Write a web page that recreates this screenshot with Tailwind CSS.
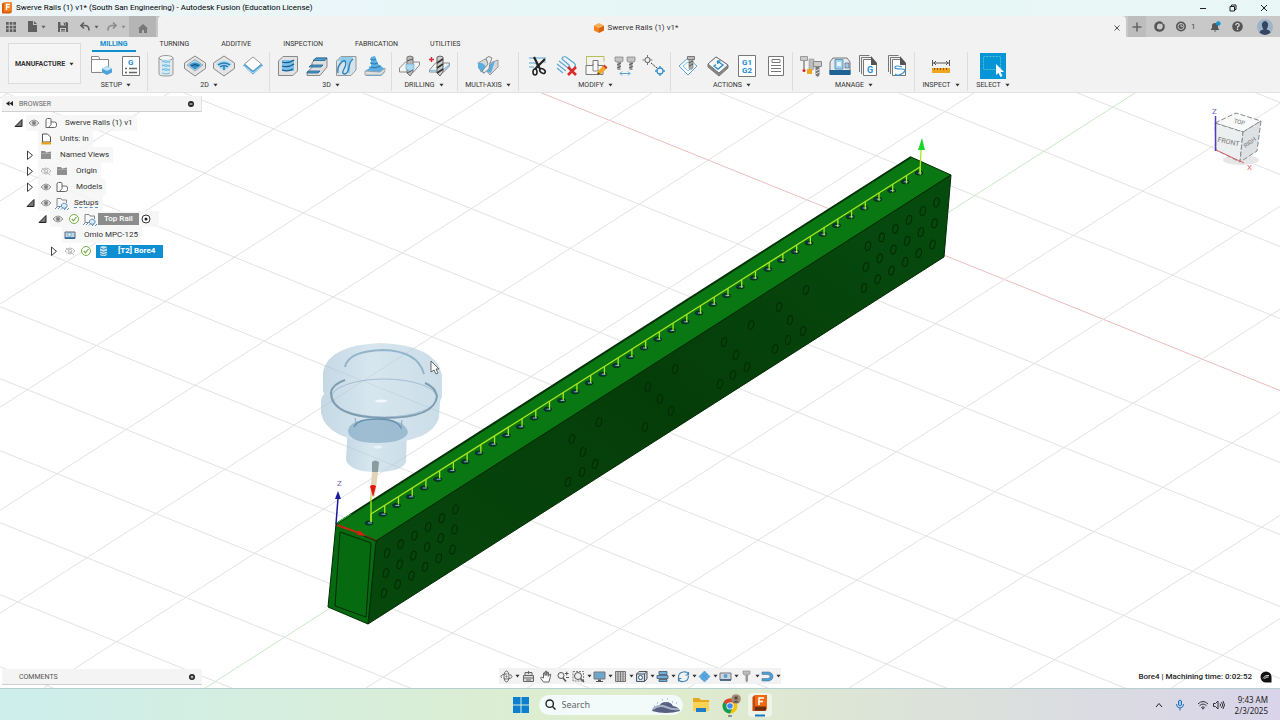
<!DOCTYPE html>
<html lang="en">

<head>
    <meta charset="UTF-8">
    <meta name="viewport" content="width=device-width, initial-scale=1.0">
    <title>Swerve Rails (1) v1* (South San Engineering) - Autodesk Fusion (Education License)</title>
    <script src="https://cdn.jsdelivr.net/npm/@tailwindcss/browser@4"></script>
</head>

<body class="h-screen overflow-hidden flex flex-col bg-white font-[Roboto,'Liberation_Sans',sans-serif] text-[8px] leading-3 text-[#333]">

    <!-- shared icons -->
    <svg class="hidden">
        <symbol id="caret" viewBox="0 0 6 4"><path d="M0.5 0.5h5L3 3.8z" fill="currentColor" /></symbol>
        <symbol id="open" viewBox="0 0 16 16"><path d="M5 11.500h7V4.500z" fill="#777" stroke="#222" /></symbol>
        <symbol id="closed" viewBox="0 0 16 16"><path d="M5.500 4v8.500l5-4.200z" fill="#fff" stroke="#444" /></symbol>
        <symbol id="eye" viewBox="0 0 16 16">
            <path d="M3 8q5-6 10 0q-5 6-10 0z" fill="#ddd" stroke="#999" />
            <circle cx="8" cy="8" r="2" fill="#808080" />
        </symbol>
        <symbol id="eyeoff" viewBox="0 0 16 16">
            <path d="M3 8q5-6 10 0q-5 6-10 0z" fill="none" stroke="#bbb" />
            <circle cx="8" cy="8" r="1.800" fill="none" stroke="#bbb" />
            <path d="M4 5l8 7" stroke="#bbb" />
        </symbol>
        <symbol id="body" viewBox="0 0 16 16">
            <path d="M3 12.500V5q0-1.500 1.500-1.500H7q1 0 1 1V7h3.500q2 0 2 2v1.500q0 2-2 2zM8 7v2.500L5.500 12.500" fill="#fff" stroke="#666" />
        </symbol>
        <symbol id="folder" viewBox="0 0 16 16"><path d="M3 4h4l1 1.500 5-1V12H3z" fill="#8f8f8f" /><path d="M3 6.500h10" stroke="#b5b5b5" stroke-width=".6" /></symbol>
        <symbol id="setup" viewBox="0 0 16 16">
            <path d="M3 11.500V3.500h4l1 1.500h4.500v3M3 11.500h4" fill="none" stroke="#888" />
            <path d="M10 8l3 1.500v2.500l-3 1.500-2.500-1.500v-2.500z" fill="#dcecf7" stroke="#3d82b8" stroke-width=".8" />
            <path d="M1 14l2-2M4 14l2-2M7 14.500l2-2M10 15l2-2M13 15l2-2" stroke="#5a8fbc" />
        </symbol>
        <symbol id="check" viewBox="0 0 16 16">
            <circle cx="8" cy="8" r="4.500" fill="#fff" stroke="#75b04a" />
            <path d="M5.800 8l1.700 1.900L10.400 6" fill="none" stroke="#75b04a" stroke-width="1.200" />
        </symbol>
        <symbol id="logo" viewBox="0 0 12 12"><path d="M1 1.500L3 .5h8v9.500l-2 1.500H1z" fill="#d95a0b" /><path d="M3 .5h8v9H3z" fill="#f58220" /><path d="M5.500 8V2.500h3.500M5.500 5h3" stroke="#fff" stroke-width="1.300" fill="none" /></symbol>
    </svg>

    <!-- window title -->
    <header class="h-4 shrink-0 flex items-center bg-linear-to-r from-[#eef6fb] via-[#e6f6f6] to-[#e9f8f6] text-black">
        <svg class="w-3 h-3 ml-px mr-[3px]"><use href="#logo" /></svg>
        <h1 class="grow">Swerve Rails (1) v1* (South San Engineering) - Autodesk Fusion (Education License)</h1>
        <button aria-label="Minimize" class="w-[30px] flex justify-center"><svg class="w-2 h-2" viewBox="0 0 8 8"><path d="M1 4.500h6" stroke="#222" /></svg></button>
        <button aria-label="Restore" class="w-[30px] flex justify-center"><svg class="w-2 h-2" viewBox="0 0 8 8" fill="none" stroke="#222"><path d="M1 2.500h4.500V7H1zM2.500 2V1H7v4.500H6" /></svg></button>
        <button aria-label="Close window" class="w-8 flex justify-center"><svg class="w-2 h-2" viewBox="0 0 8 8" stroke="#222"><path d="M1 1l6 6M7 1L1 7" /></svg></button>
    </header>

    <!-- document tabs -->
    <div class="h-[21px] shrink-0 flex items-stretch bg-[#c8c8c8] text-[#606060]">
        <div class="w-[129px] flex items-center">
            <button aria-label="Data panel" class="ml-1.5 w-[10px]"><svg class="w-[10px] h-[10px]" viewBox="0 0 10 10" fill="currentColor"><path d="M0 0h2.700v2.700H0zM3.700 0h2.700v2.700H3.700zM7.300 0H10v2.700H7.300zM0 3.700h2.700v2.700H0zM3.700 3.700h2.700v2.700H3.700zM7.300 3.700H10v2.700H7.300zM0 7.300h2.700V10H0zM3.700 7.300h2.700V10H3.700zM7.300 7.300H10V10H7.300z" /></svg></button>
            <button aria-label="File" class="ml-3 flex items-center gap-1"><svg class="w-[9px] h-[11px]" viewBox="0 0 9 11" fill="currentColor"><path d="M0 0h5v4h4v7H0zM6 0l3 3H6z" /></svg><svg class="w-[5px] h-1"><use href="#caret" /></svg></button>
            <button aria-label="Save" class="ml-3"><svg class="w-[10px] h-[10px]" viewBox="0 0 10 10"><path d="M0 0h9l1 1v9H0z" fill="currentColor" /><path d="M2.500 0h5v3.500h-5zM2 6h6v4H2z" fill="#c8c8c8" /><path d="M5.500 1h1v2M3 7.500h4M3 9h4" stroke="currentColor" fill="none" /></svg></button>
            <button aria-label="Undo" class="ml-3 flex items-center gap-1"><svg class="w-[10px] h-[9px]" viewBox="0 0 10 9" fill="none" stroke="currentColor" stroke-width="1.600"><path d="M4 .5L1 3.500l3 3M1 3.500h4q4 0 4 5" /></svg><svg class="w-[5px] h-1"><use href="#caret" /></svg></button>
            <button aria-label="Redo" class="ml-2 flex items-center gap-1 text-[#8c8c8c]"><svg class="w-[10px] h-[9px]" viewBox="0 0 10 9" fill="none" stroke="currentColor" stroke-width="1.600"><path d="M6 .5l3 3-3 3M9 3.500H5q-4 0-4 5" /></svg><svg class="w-[5px] h-1"><use href="#caret" /></svg></button>
        </div>
        <button aria-label="Home" class="w-[27px] mr-0.5 bg-[#b5b5b5] flex justify-center items-center pt-1"><svg class="w-[10px] h-[9px]" viewBox="0 0 10 9" fill="#777"><path d="M5 0l5 4.500H9V9H6V6H4v3H1V4.500H0z" /></svg></button>
        <div class="grow flex items-center pt-0.5 bg-[#f2f2f2] rounded-t-sm text-[#333]">
            <div class="grow flex items-center justify-center gap-1 pl-1.5">
                <svg class="w-[10px] h-[10px]" viewBox="0 0 10 10"><path d="M5 0l5 2.500L5 5 0 2.500z" fill="#f9ae5f" /><path d="M0 2.500L5 5v5L0 7.500z" fill="#f58220" /><path d="M10 2.500L5 5v5l5-2.500z" fill="#d96508" /></svg>
                <span>Swerve Rails (1) v1*</span>
            </div>
            <button aria-label="Close tab" class="w-[18px] flex justify-center"><svg class="w-1.5 h-1.5" viewBox="0 0 6 6" stroke="#555"><path d="M.5.5l5 5M5.500.5l-5 5" /></svg></button>
        </div>
        <button aria-label="New tab" class="w-[18px] ml-0.5 bg-[#bdbdbd] flex justify-center items-center"><svg class="w-[10px] h-[10px]" viewBox="0 0 10 10" stroke="#666" stroke-width="1.600"><path d="M5 .5v9M.5 5h9" /></svg></button>
        <div class="w-[134px] flex items-center text-[#555]">
            <button aria-label="Extensions" class="ml-2"><svg class="w-[11px] h-[11px]" viewBox="0 0 11 11"><circle cx="5.500" cy="5.500" r="5.300" fill="currentColor" /><path d="M3.500 3.500Q5 2 6.500 3L8 2.500l.5 2 .5 1Q8 9 5.500 8.500 2 8 3 5z" fill="#c8c8c8" /><path d="M8 0l3 1-1.500 2.500z" fill="#c8c8c8" /></svg></button>
            <button aria-label="Job status" class="ml-[11px] flex items-center gap-1 text-[#444]"><svg class="w-[11px] h-[11px]" viewBox="0 0 11 11"><circle cx="5" cy="5.500" r="5" fill="#555" /><circle cx="5" cy="5.500" r="3" fill="none" stroke="#c8c8c8" /><path d="M5 3.500v2.200h2" stroke="#c8c8c8" fill="none" /></svg>1</button>
            <button aria-label="Notifications" class="ml-[14px]"><svg class="w-[11px] h-[11px]" viewBox="0 0 11 11"><path d="M.5 9h9L8 7V4.500Q8 2 5 2T2 4.500V7zM4 9.500h2.500L5 11z" fill="currentColor" /><circle cx="8.300" cy="2.500" r="2.300" fill="#1593cc" /></svg></button>
            <button aria-label="Help" class="ml-[11px]"><svg class="w-[11px] h-[11px]" viewBox="0 0 11 11"><circle cx="5.500" cy="5.500" r="5.300" fill="currentColor" /><path d="M3.800 4.200q0-1.700 1.700-1.700t1.700 1.500Q7.200 5 5.500 6v.8M5.500 7.600V9" fill="none" stroke="#e5e5e5" stroke-width="1.200" /></svg></button>
            <button aria-label="Account" class="ml-[14px]"><svg class="w-4 h-4" viewBox="0 0 16 16"><circle cx="8" cy="8" r="8" fill="#9db3c9" /><path d="M2.500 13.800Q3 11 6.500 10.500 4.500 8 5 4.500 6 2 8 2t3 2.500q.5 3.500-1.500 6 3.500.5 4 3.300Q8 18 2.500 13.800z" fill="#34475e" /></svg></button>
        </div>
    </div>

    <!-- ribbon -->
    <div class="h-[56px] shrink-0 flex bg-[#f2f2f2] border-b border-[#e2e2e2]">
        <button class="w-[73px] h-[41px] ml-2 mt-1.5 flex items-center justify-center gap-1 border border-[#dcdcdc] bg-[#f5f5f5] text-[7px] font-bold">MANUFACTURE<svg class="w-[5px] h-1"><use href="#caret" /></svg></button>
        <div class="ml-[3px]">
            <nav class="h-[15px] flex items-stretch gap-4 pl-2 text-[7px]">
                <a href="#" class="px-2 pt-px border-b-2 border-[#0e8ecb] text-[#0e8ecb] font-bold">MILLING</a>
                <a href="#" class="px-2 pt-px">TURNING</a>
                <a href="#" class="px-2 pt-px">ADDITIVE</a>
                <a href="#" class="px-2 pt-px">INSPECTION</a>
                <a href="#" class="px-2 pt-px">FABRICATION</a>
                <a href="#" class="px-2 pt-px">UTILITIES</a>
            </nav>
            <div class="flex text-[7px]">
                <div class="pl-[3px] pr-0.5 border-r border-[#ddd]">
                    <div class="h-[27px] flex items-center">
                        <button aria-label="New setup" class="w-[29px] flex justify-center"><svg class="w-6 h-6" viewBox="0 0 24 24"><path d="M1.500 18.500v-16h7l1.500 3h8.500v8M1.500 18.500H12M1.500 5.500H10" fill="#fff" stroke="#888" /><path d="M17 12l5 2.500v4L17 21l-5-2.500v-4z" fill="#4ba3d9" /><path d="M17 12l5 2.500-5 2.500-5-2.500z" fill="#c2e2f5" /></svg></button>
                        <button aria-label="NC program" class="w-[29px] flex justify-center"><svg class="w-6 h-6" viewBox="0 0 24 24"><path d="M3.500 2.500h17v19h-17z" fill="#fff" stroke="#777" /><path d="M6 14.500h2M6 18.500h2M10 14.500h8M10 18.500h8" stroke="#666" stroke-width="1.400" /><text x="9" y="11" font-size="8" font-weight="700" fill="#1a8cd0">G</text></svg></button>
                    </div>
                    <button class="w-full flex items-center justify-center gap-1">SETUP<svg class="w-[5px] h-1"><use href="#caret" /></svg></button>
                </div>
                <div class="pl-[3px] pr-0.5 border-r border-[#ddd]">
                    <div class="h-[27px] flex items-center">
                        <button aria-label="2D adaptive" class="w-[29px] flex justify-center"><svg class="w-6 h-6" viewBox="0 0 24 24"><path d="M5 4v16q0 2 7 2t7-2V4z" fill="#e5e7e9" stroke="#999" /><ellipse cx="12" cy="4" rx="7" ry="2.500" fill="#f5f5f5" stroke="#999" /><path d="M8 5v14q4 3 8 0V5q-4 2-8 0z" fill="#d2eaf7" /><path d="M8 7q4 3 8 0M8 11q4 3 8 0M8 15q4 3 8 0M8 19q4 2 8 0M8 8q4-3 8 1M8 12q4-3 8 1M8 16q4-3 8 1" fill="none" stroke="#5fb0df" stroke-width=".8" /></svg></button>
                        <button aria-label="2D pocket" class="w-[29px] flex justify-center"><svg class="w-6 h-6" viewBox="0 0 24 24"><path d="M12 2l10.500 7v5.500L12 22 1.500 14.500V9z" fill="#e4e5e6" stroke="#888" /><path d="M12 5.500L20 11l-8 6-8-6z" fill="#a8d5ee" stroke="#888" stroke-width=".6" /><path d="M6 11q6-5 12 0l-6 4.500z" fill="#318fc9" /><path d="M8 12q4-3 8 0" fill="none" stroke="#124a75" /></svg></button>
                        <button aria-label="Face" class="w-[29px] flex justify-center"><svg class="w-6 h-6" viewBox="0 0 24 24"><path d="M12 2l10.500 7v5.500L12 22 1.500 14.500V9z" fill="#e4e5e6" stroke="#888" /><path d="M4 10q8-7 16 0l-8 7z" fill="#a8d5ee" /><path d="M6 11q6-4 12 0M8 13q4-3 8 0M12 12v4" fill="none" stroke="#247fb8" stroke-width="1.500" /></svg></button>
                        <button aria-label="2D contour" class="w-[29px] flex justify-center"><svg class="w-6 h-6" viewBox="0 0 24 24"><path d="M12 3l8.500 7-8.500 7-8.500-7z" fill="#fafafa" stroke="#999" /><path d="M2 11.500l1.500-1.500 8.500 7 8.500-7 1.500 1.500-10 9z" fill="#4ba3d9" /><path d="M3 12l9 7 9-7" fill="none" stroke="#b8dff5" /></svg></button>
                    </div>
                    <button class="w-full flex items-center justify-center gap-1">2D<svg class="w-[5px] h-1"><use href="#caret" /></svg></button>
                </div>
                <div class="pl-[3px] pr-0.5 border-r border-[#ddd]">
                    <div class="h-[27px] flex items-center">
                        <button aria-label="Adaptive clearing" class="w-[29px] flex justify-center"><svg class="w-6 h-6" viewBox="0 0 24 24"><path d="M2.500 7L7 2.500h14.500V17L17 21.500H2.500z" fill="#e0e2e4" stroke="#888" /><path d="M6 6h12v11H6z" fill="#7cc0e8" /><path d="M6 8q6 2 12-2M6 12q6 2 12-2M6 16q6 2 11-1" fill="none" stroke="#135c92" stroke-width="1.300" /></svg></button>
                        <button aria-label="Pocket clearing" class="w-[29px] flex justify-center"><svg class="w-6 h-6" viewBox="0 0 24 24"><path d="M2 21.500v-3l5-5V9l4-5h11v9l-7 8.500z" fill="#dcdee0" stroke="#888" /><path d="M11 4h11l-2 2.500H8zM6 11h12l-2 2H4zM3 17h12l-2 2H2z" fill="#4ba3d9" stroke="#164f79" stroke-width=".7" /></svg></button>
                        <button aria-label="Parallel" class="w-[29px] flex justify-center"><svg class="w-6 h-6" viewBox="0 0 24 24"><path d="M2.500 7L7 2.500h15V16l-5 5.500H2.500z" fill="#d5e3ec" stroke="#999" /><path d="M4 7l3-4h12l-3 4v12h-3V8z" fill="#8fcbed" /><path d="M4 19Q3 14 6 10t5-3q2 3-1 8t1 5q3-1 4-7t4-8" fill="none" stroke="#2f81b6" stroke-width="1.400" /></svg></button>
                        <button aria-label="Contour" class="w-[29px] flex justify-center"><svg class="w-6 h-6" viewBox="0 0 24 24"><path d="M2 17l6-4V3l4-1 3 8 7 5v3l-4 4H3z" fill="#5aaee0" /><path d="M2 17v4h16l4-4v-3l-5 4z" fill="#dcdee0" stroke="#999" stroke-width=".8" /><path d="M7 5q4 2 6 0M7 9q5 2 8 0M6 13q6 2 12-1" fill="none" stroke="#2778b0" /></svg></button>
                    </div>
                    <button class="w-full flex items-center justify-center gap-1">3D<svg class="w-[5px] h-1"><use href="#caret" /></svg></button>
                </div>
                <div class="pl-[3px] pr-1 border-r border-[#ddd]">
                    <div class="h-[27px] flex items-center">
                        <button aria-label="Drill" class="w-[29px] flex justify-center"><svg class="w-6 h-6" viewBox="0 0 24 24"><path d="M1.500 14l6-6h14v3l-6 7h-14z" fill="#f4f4f4" stroke="#888" /><path d="M9 3q3-2 6 0v15l-3 4-3-3z" fill="#b8b8b8" stroke="#777" /><path d="M9 7l6-2M9 19l6-3" stroke="#555" /><path d="M8 10h8v5l-4 2-4-2z" fill="#a9d8f2" stroke="#6aa0be" stroke-width=".6" /></svg></button>
                        <button aria-label="Hole recognition" class="w-[29px] flex justify-center"><svg class="w-6 h-6" viewBox="0 0 24 24"><path d="M2.500 16l6-7h14v3l-6 6h-14z" fill="#f4f4f4" stroke="#888" /><path d="M2.500 16.500h13l7-6" fill="none" stroke="#8cc7e8" stroke-width="1.500" /><path d="M10 3q3-2 6 0v15l-3 4-3-3z" fill="#ccc" stroke="#666" /><path d="M10 9l6-4M10 14l6-4M10 19l6-4" stroke="#333" stroke-width="1.600" /><path d="M4.500 3v5M2 5.500h5" stroke="#d12a35" stroke-width="1.400" /></svg></button>
                    </div>
                    <button class="w-full flex items-center justify-center gap-1">DRILLING<svg class="w-[5px] h-1"><use href="#caret" /></svg></button>
                </div>
                <div class="w-[61px] border-r border-[#ddd]">
                    <div class="h-[27px] flex items-center justify-center">
                        <button aria-label="Swarf" class="w-[29px] flex justify-center"><svg class="w-6 h-6" viewBox="0 0 24 24"><path d="M2 9l7-4 5 4 8-3v7l-8 8-4-5-5 2z" fill="#d5d7d9" stroke="#999" /><path d="M2 9q5-1 8 4l-2 7-6-6zM10 13l9-6-4 12-4-1z" fill="#5aaee0" /><path d="M10 4q3-3 6 0l-2 5-1 6-5 4q-2-1-1-3l5-6z" fill="#eee" stroke="#888" /></svg></button>
                    </div>
                    <button class="w-full flex items-center justify-center gap-1">MULTI-AXIS<svg class="w-[5px] h-1"><use href="#caret" /></svg></button>
                </div>
                <div class="pl-1 pr-0.5 border-r border-[#ddd]">
                    <div class="h-[27px] flex items-center">
                        <button aria-label="Trim" class="w-[29px] flex justify-center"><svg class="w-6 h-6" viewBox="0 0 24 24"><path d="M3 4h17M3 9h5q3 0 3 4M20 8h-4M3 13h5" fill="none" stroke="#5aa7d4" stroke-width="1.200" /><path d="M8 3l6 12M19 5L9 15" stroke="#222" stroke-width="2.200" /><ellipse cx="9" cy="18" rx="2" ry="3" fill="none" stroke="#222" stroke-width="1.600" /><ellipse cx="16.500" cy="17" rx="3" ry="2" fill="none" stroke="#222" stroke-width="1.600" transform="rotate(35 16.500 17)" /></svg></button>
                        <button aria-label="Delete passes" class="w-[29px] flex justify-center"><svg class="w-6 h-6" viewBox="0 0 24 24"><path d="M2 14l6 5M2 10l9 7M4 7l9 7q3 0 1-3L7 5q0-3 4-2l8 6q3 3 0 4" fill="none" stroke="#5aa7d4" stroke-width="1.200" /><path d="M13 13l8 8M21 13l-8 8" stroke="#d92b2b" stroke-width="2.600" /></svg></button>
                        <button aria-label="Edit stock" class="w-[29px] flex justify-center"><svg class="w-6 h-6" viewBox="0 0 24 24"><path d="M2 2.500h18v5M2.500 2v9" fill="none" stroke="#b7bf55" /><path d="M2 11.500h7v-5h5v5h5v9h-17z" fill="#f8f8f8" stroke="#777" /><path d="M9 10v7h5v-7" fill="none" stroke="#888" /><path d="M13 21l1-4 6-6 3 3-6 6z" fill="#f5a623" /><path d="M19 12l1.500-1.500 3 3L22 15z" fill="#d83a2a" /><path d="M13 21l1-3 2 2z" fill="#444" /></svg></button>
                        <button aria-label="Replace tool" class="w-[29px] flex justify-center"><svg class="w-6 h-6" viewBox="0 0 24 24"><path d="M2 3h8v4l-1 1H3L2 7zM14 3h8v4l-1 1h-6l-1-1z" fill="#c4c4c4" stroke="#888" stroke-width=".8" /><path d="M4.500 8h3v8h-3zM16.500 8h3v8h-3z" fill="#999" /><path d="M4 11l4-2M4 14l4-2M16 11l4-2M16 14l4-2" stroke="#555" /><path d="M7 19.500h10M9 17.500l-2 2 2 2M15 17.500l2 2-2 2" fill="none" stroke="#55a4d0" /></svg></button>
                        <button aria-label="Move entry position" class="w-[29px] flex justify-center"><svg class="w-6 h-6" viewBox="0 0 24 24" fill="none"><circle cx="5.500" cy="6" r="2.500" stroke="#777" stroke-width="1.200" /><path d="M5.500 1v2M5.500 9v2M.5 6h2M8.500 6h2" stroke="#777" /><path d="M9 9l6 5" stroke="#333" stroke-dasharray="2 1" /><circle cx="18" cy="17" r="3" stroke="#3b93cc" stroke-width="1.300" /><path d="M18 12v2M18 20v2M13 17h2M21 17h2" stroke="#3b93cc" stroke-width="1.300" /></svg></button>
                    </div>
                    <button class="w-full flex items-center justify-center gap-1">MODIFY<svg class="w-[5px] h-1"><use href="#caret" /></svg></button>
                </div>
                <div class="pl-[3px] pr-0.5 border-r border-[#ddd]">
                    <div class="h-[27px] flex items-center">
                        <button aria-label="Simulate" class="w-[29px] flex justify-center"><svg class="w-6 h-6" viewBox="0 0 24 24"><path d="M11 4l9 8-9 9-9-9z" fill="#f8fbfd" stroke="#5aa7d4" /><path d="M11 8l5 4-5 5-5-5z" fill="none" stroke="#90c5e4" /><path d="M10.500 2.500h7v3h-7z" fill="#bbb" stroke="#777" /><path d="M12 5.500h4V14l-2 1.500-2-1.500z" fill="#aaa" stroke="#777" stroke-width=".7" /><path d="M12 9l4-2M12 12l4-2" stroke="#555" /></svg></button>
                        <button aria-label="Generate" class="w-[29px] flex justify-center"><svg class="w-6 h-6" viewBox="0 0 24 24"><path d="M2 10l8-7 12 8v3l-9 8L2 13z" fill="#888" stroke="#777" /><path d="M2 10l8-7 12 8-9 8z" fill="#fafafa" stroke="#777" /><path d="M10 10.500L8 12l4 3 5-4-5-3.500M14.500 7l-3 .2.300 2.800" fill="none" stroke="#2f8fca" stroke-width="1.400" /></svg></button>
                        <button aria-label="Post process" class="w-[29px] flex justify-center"><svg class="w-6 h-6" viewBox="0 0 24 24"><path d="M3.500 1.500h17v21h-17z" fill="#fff" stroke="#777" /><text x="12" y="11" text-anchor="middle" font-size="8" font-weight="700" fill="#1a8cd0">G1</text><text x="12" y="19" text-anchor="middle" font-size="8" font-weight="700" fill="#1a8cd0">G2</text></svg></button>
                        <button aria-label="Setup sheet" class="w-[29px] flex justify-center"><svg class="w-6 h-6" viewBox="0 0 24 24" fill="#fff" stroke="#777"><path d="M4.500 2.500h15v19h-15z" /><path d="M8 5.500h8v3H8zM7 11.500h10M7 14.500h10M7 17.500h10" /></svg></button>
                    </div>
                    <button class="w-full flex items-center justify-center gap-1">ACTIONS<svg class="w-[5px] h-1"><use href="#caret" /></svg></button>
                </div>
                <div class="pl-[3px] pr-0.5 border-r border-[#ddd]">
                    <div class="h-[27px] flex items-center">
                        <button aria-label="Tool library" class="w-[29px] flex justify-center"><svg class="w-6 h-6" viewBox="0 0 24 24"><path d="M1.500 2.500h7v4h-7z" fill="#ccc" stroke="#999" /><path d="M5 7v8" stroke="#888" stroke-width="1.500" /><circle cx="5" cy="16.500" r="1.500" fill="#d22" /><path d="M10 5h5v10l-3 2-2-2z" fill="#bbb" stroke="#999" stroke-width=".6" /><path d="M8 15h5v5H8z" fill="#f0a51f" /><path d="M14.500 7.500h8v5h-8z" fill="#ccc" stroke="#888" /><path d="M16.500 13h4v8l-2 2-2-2z" fill="#777" /><path d="M16.500 17l4-2M16.500 20l4-2" stroke="#ddd" /></svg></button>
                        <button aria-label="Machine library" class="w-[29px] flex justify-center"><svg class="w-6 h-6" viewBox="0 0 24 24"><path d="M2 20V8l3-4h14l3 4v12z" fill="#e8eaec" stroke="#777" /><path d="M1.500 16h21v5h-21z" fill="#1f6394" /><path d="M7 5.500h8V15H7z" fill="#a5d3ee" stroke="#5b98bd" /><path d="M9 8h4v4H9z" fill="#e9f5fb" /><path d="M17 9h4v5h-4z" fill="#9fc9e2" stroke="#557" stroke-width=".6" /></svg></button>
                        <button aria-label="Post library" class="w-[29px] flex justify-center"><svg class="w-6 h-6" viewBox="0 0 24 24"><path d="M2.500 18V1.500h10M4.500 20V3.500h10" fill="none" stroke="#777" /><path d="M6.500 5.500h8l5 5v11h-13z" fill="#fff" stroke="#777" /><path d="M14 2l6 7v2h-6z" fill="#555" /><text x="13" y="19" text-anchor="middle" font-size="9" font-weight="700" fill="#1a8cd0">G</text></svg></button>
                        <button aria-label="Template library" class="w-[29px] flex justify-center"><svg class="w-6 h-6" viewBox="0 0 24 24"><path d="M2.500 18V1.500h10M4.500 20V3.500h10" fill="none" stroke="#777" /><path d="M6.500 5.500h8l5 5v11h-13z" fill="#fff" stroke="#777" /><path d="M14 2l6 7v2h-6z" fill="#555" /><path d="M16 13q-6-2-7 0t6 2 2 4-8 1" fill="none" stroke="#3b93cc" stroke-width="1.200" /></svg></button>
                    </div>
                    <button class="w-full flex items-center justify-center gap-1">MANAGE<svg class="w-[5px] h-1"><use href="#caret" /></svg></button>
                </div>
                <div class="w-[53px] border-r border-[#ddd]">
                    <div class="h-[27px] flex items-center justify-center">
                        <button aria-label="Measure" class="w-[29px] flex justify-center"><svg class="w-6 h-6" viewBox="0 0 24 24"><path d="M3.500 6v6M20.500 6v6M4 9h16M7 7L5 9l2 2M17 7l2 2-2 2" fill="none" stroke="#555" /><path d="M3 14h18v5H3z" fill="#f0a51f" /><path d="M5.500 14v2M8.500 14v2M11.500 14v2M14.500 14v2M17.500 14v2" stroke="#8c5a05" /></svg></button>
                    </div>
                    <button class="w-full flex items-center justify-center gap-1">INSPECT<svg class="w-[5px] h-1"><use href="#caret" /></svg></button>
                </div>
                <div class="w-[50px]">
                    <div class="h-[27px] flex items-center justify-center">
                        <button aria-label="Select" class="w-[26px] h-[26px] bg-[#0696d7]"><svg class="w-[26px] h-[26px]" viewBox="0 0 26 26"><path d="M3.500 3.500h17v13h-17z" fill="none" stroke="#4cc1c9" stroke-dasharray="2 1" /><path d="M16 11v11l2.500-2 2 4 2-1-2-4h3.500z" fill="#fff" /></svg></button>
                    </div>
                    <button class="w-full flex items-center justify-center gap-1">SELECT<svg class="w-[5px] h-1"><use href="#caret" /></svg></button>
                </div>
            </div>
        </div>
    </div>

    <!-- viewport -->
    <main class="relative grow min-h-0 overflow-hidden">
        <svg class="absolute inset-0 w-full h-full" viewBox="0 93 1280 595" preserveAspectRatio="xMidYMid slice">
            <g id="grid" stroke-width="1"></g>
            <!-- rail -->
            <defs>
                <linearGradient id="side" x1="0" y1="1" x2="1" y2="0"><stop offset="0" stop-color="#06480c" /><stop offset=".5" stop-color="#053d09" /><stop offset="1" stop-color="#064c0e" /></linearGradient>
                <linearGradient id="glass" x1="0" y1="0" x2="1" y2="0"><stop offset="0" stop-color="#9fc0d4" /><stop offset=".4" stop-color="#bdd6e4" /><stop offset="1" stop-color="#a9c8da" /></linearGradient>
            </defs>
            <g stroke="#032a05" stroke-linejoin="round">
                <path d="M336 524L911 157L951 175L376 541z" fill="#0a7812" />
                <path d="M376 541L951 175L944 257L368 624z" fill="url(#side)" />
                <path d="M336 524L376 541L368 624L328 607z" fill="#066a10" />
                <path d="M340 532L371 543L366 617L335 606z" fill="none" />
            </g>
            <path d="M336 524L911 157" stroke="#04330a" stroke-width="2" />
            <g id="sideHoles" fill="none" stroke="#032a05" stroke-width="1"></g>
            <g id="topHoles"></g>
            <g id="toolpath" stroke="#a8e61e" stroke-width="1.300"></g>
            <path d="M371 514L920 167M371 496v26M920 173L921 150" stroke="#a8e61e" stroke-width="1.300" fill="none" />
            <path d="M922 138l3 12h-7z" fill="#1bd62a" />
            <!-- work coordinate system -->
            <path d="M336 524L338 498" stroke="#1a1a9c" stroke-width="1.500" />
            <path d="M338 491l3 8h-6z" fill="#1a1a9c" />
            <path d="M337 525l22 8" stroke="#c22a12" stroke-width="2" />
            <path d="M366 536l-9-1 2-5z" fill="#d2220f" />
            <path d="M366 536l10 4" stroke="#8a2010" />
            <path d="M337 523l14-9" stroke="#38c83a" />
            <text x="337" y="486" font-size="8" fill="#6a62b8">Z</text>
            <!-- holder and bore tool -->
            <g opacity=".6">
                <path d="M348 425q1-7 29-8q28 1 30 8l-1 37q-4 10-30 10t-30-12z" fill="url(#glass)" />
                <path d="M321 400q3-18 60-20 56 3 59 22l-1 16q-8 24-57 25-55-2-61-30z" fill="url(#glass)" />
                <path d="M323 372q5-27 58-29 55 2 61 32v22q-6 21-58 22-55-2-61-28z" fill="url(#glass)" />
            </g>
            <g fill="none">
                <path d="M345 367q3-16 38-17 35 1 41 24" stroke="#93b5cb" stroke-width="2" />
                <ellipse cx="384" cy="398" rx="53" ry="19" stroke="#a4bfd0" />
                <path d="M331 392q0 25 53 26 51 0 53-22-2-9-12-13" stroke="#7f9db1" stroke-width="2" />
                <path d="M331 392q2-8 14-12" stroke="#7f9db1" stroke-width="2" />
                <path d="M355 418l2 8M402 420l-1 10" stroke="#86a9bf" />
            </g>
            <path d="M348 431q1-12 29-12t31 13q-3 11-31 11t-29-12z" fill="#7fa8c4" opacity=".65" />
            <path d="M354 427q3-8 23-8t24 9" fill="none" stroke="#6892b0" stroke-width="1.500" />
            <ellipse cx="381" cy="401" rx="6" ry="1.500" fill="#f3f9fc" />
            <ellipse cx="378" cy="447" rx="4" ry="1.500" fill="#e8f3f8" />
            <path d="M372 462q3-3 7 0l-1 10h-6z" fill="#8c9ba0" />
            <path d="M372 472h6l-3 24h-5z" fill="#dccbac" opacity=".85" />
            <path d="M370 486q3-2 6 0l-3 11z" fill="#e3150c" />
            <path d="M431 361v11l3-2 2 4 2-1-2-4h3z" fill="#fff" stroke="#444" stroke-width=".8" />
            <!-- view cube -->
            <ellipse cx="1241" cy="160" rx="18" ry="5" fill="#e6e6e6" />
            <g stroke="#888" stroke-dasharray="5 2" stroke-width="1">
                <path d="M1215 123L1236 113L1261 121L1243 132z" fill="#f8f9f9" />
                <path d="M1215 123L1243 132L1240 162L1216 150z" fill="#eceff0" />
                <path d="M1243 132L1261 121L1257 151L1240 162z" fill="#dde1e3" />
            </g>
            <path d="M1215.500 116v35" stroke="#4a3fc0" stroke-width="1.500" />
            <path d="M1216 150l28 13" stroke="#d66" />
            <text x="1212" y="114" font-size="8" fill="#6a62c8">Z</text>
            <text x="1247" y="170" font-size="8" fill="#e06a6a">X</text>
            <g fill="#777" font-size="7" text-anchor="middle">
                <text x="1228" y="144" transform="rotate(12 1228 144)">FRONT</text>
                <text x="1239" y="124" font-size="6" transform="rotate(12 1239 124)">TOP</text>
                <text x="1251" y="144" font-size="6" transform="rotate(-35 1251 144)">RIGH</text>
            </g>
        </svg>

        <!-- browser tree -->
        <aside class="absolute left-0.5 top-[3px] w-[200px]">
            <div class="h-4 flex items-center pl-1 bg-[#f4f4f4] border-b border-[#cfcfcf] border-r border-r-[#e2e2e2] text-[7px] text-[#666]">
                <svg class="w-[7px] h-[5px]" viewBox="0 0 7 5" fill="#222"><path d="M3.500 0v5L0 2.500zM7 0v5L3.500 2.500z" /></svg>
                <h2 class="grow ml-1.5">BROWSER</h2>
                <button aria-label="Collapse browser" class="w-5 flex justify-center"><svg class="w-1.5 h-1.5" viewBox="0 0 6 6"><circle cx="3" cy="3" r="3" fill="#222" /><path d="M1.500 3h3" stroke="#fff" /></svg></button>
            </div>
            <ul class="pt-[3px] pl-px">
                <li class="h-4 flex items-center pl-[7px]">
                    <svg class="w-4 h-4"><use href="#open" /></svg>
                    <div class="flex items-center bg-[#f5f5f5]/80 pr-1"><svg class="w-4 h-4"><use href="#eye" /></svg><svg class="w-4 h-4 ml-px"><use href="#body" /></svg><span class="ml-1.5">Swerve Rails (1) v1</span></div>
                </li>
                <li class="h-4 flex items-center pl-[35px]">
                    <div class="flex items-center bg-[#f5f5f5]/80 pr-1"><svg class="w-4 h-4" viewBox="0 0 16 16"><path d="M4.500 3h5l3 3v5h-8z" fill="#fff" stroke="#555" /><path d="M3.500 11h9.500v2.500H3.500z" fill="#e5a020" /></svg><span class="ml-1.5">Units: in</span></div>
                </li>
                <li class="h-4 flex items-center pl-[19px]">
                    <svg class="w-4 h-4"><use href="#closed" /></svg>
                    <div class="flex items-center bg-[#f5f5f5]/80 pr-1"><svg class="w-4 h-4"><use href="#folder" /></svg><span class="ml-1.5">Named Views</span></div>
                </li>
                <li class="h-4 flex items-center pl-[19px]">
                    <svg class="w-4 h-4"><use href="#closed" /></svg>
                    <div class="flex items-center bg-[#f5f5f5]/80 pr-1"><svg class="w-4 h-4"><use href="#eyeoff" /></svg><svg class="w-4 h-4"><use href="#folder" /></svg><span class="ml-1.5">Origin</span></div>
                </li>
                <li class="h-4 flex items-center pl-[19px]">
                    <svg class="w-4 h-4"><use href="#closed" /></svg>
                    <div class="flex items-center bg-[#f5f5f5]/80 pr-1"><svg class="w-4 h-4"><use href="#eye" /></svg><svg class="w-4 h-4"><use href="#body" /></svg><span class="ml-1.5">Models</span></div>
                </li>
                <li class="h-4 flex items-center pl-[19px]">
                    <svg class="w-4 h-4"><use href="#open" /></svg>
                    <div class="flex items-center bg-[#f5f5f5]/80 pr-1"><svg class="w-4 h-4"><use href="#eye" /></svg><svg class="w-4 h-4"><use href="#setup" /></svg><span class="ml-1 underline decoration-dashed decoration-[#5a8fbc] underline-offset-2">Setups</span></div>
                </li>
                <li class="h-4 flex items-center pl-[31px]">
                    <svg class="w-4 h-4"><use href="#open" /></svg>
                    <div class="flex items-center bg-[#f5f5f5]/80 pr-1"><svg class="w-4 h-4"><use href="#eye" /></svg><svg class="w-4 h-4"><use href="#check" /></svg><svg class="w-4 h-4"><use href="#setup" /></svg><span class="px-1.5 bg-[#8c8c8c] text-white font-medium">Top Rail</span><svg class="w-4 h-4" viewBox="0 0 16 16"><circle cx="7" cy="8" r="4" fill="#fff" stroke="#333" /><circle cx="7" cy="8" r="1.500" fill="#222" /></svg></div>
                </li>
                <li class="h-4 flex items-center pl-[59px]">
                    <div class="flex items-center bg-[#f5f5f5]/80 pr-1"><svg class="w-4 h-4" viewBox="0 0 16 16"><path d="M3 5h10v6.500H3z" fill="#b9d9ee" stroke="#667" /><path d="M6 6h3v3H6z" fill="#fff" stroke="#48a" stroke-width=".6" /><path d="M3 11h10" stroke="#2a6a9a" stroke-width="1.600" /></svg><span class="ml-1.5">Omio MPC-125</span></div>
                </li>
                <li class="h-4 flex items-center pl-[43px]">
                    <svg class="w-4 h-4"><use href="#closed" /></svg>
                    <svg class="w-4 h-4"><use href="#eyeoff" /></svg><svg class="w-4 h-4"><use href="#check" /></svg>
                    <div class="h-[13px] ml-0.5 pr-2 flex items-center bg-[#0e8fd2] text-white font-bold"><svg class="w-4 h-3" viewBox="0 0 16 12"><path d="M4 3v6q0 2 3.500 2T11 9V3q0-2-3.500-2T4 3z" fill="#bfe1f4" /><path d="M4 3q3.500 2.500 7 0M4 6q3.500 2.500 7 0M4 8.500q3.500 2.500 7 0" stroke="#3f8dbd" fill="none" /></svg><span class="ml-1.5">[T2] Bore4</span></div>
                </li>
            </ul>
        </aside>

        <section class="absolute left-0.5 bottom-[3px] w-[200px] h-4 flex items-center pl-[17px] bg-[#f4f4f4] border-b border-[#cfcfcf] text-[7px] text-[#555]">
            <h2 class="grow">COMMENTS</h2>
            <button aria-label="Expand comments" class="w-5 flex justify-center"><svg class="w-1.5 h-1.5" viewBox="0 0 6 6"><circle cx="3" cy="3" r="3" fill="#222" /><path d="M1.500 3h3M3 1.500v3" stroke="#fff" stroke-width=".8" /></svg></button>
        </section>

        <!-- navigation bar -->
        <div class="absolute inset-x-0 bottom-1 flex justify-center">
            <div class="h-4 flex items-center bg-[#f2f2f2] text-[#333]">
                <button aria-label="Orbit" class="w-[21px] flex items-center justify-center"><svg class="w-[13px] h-[13px]" viewBox="0 0 13 13" fill="none" stroke="#666"><ellipse cx="6.500" cy="6.500" rx="5.500" ry="2.500" stroke-dasharray="9 2" /><ellipse cx="6.500" cy="6.500" rx="2.500" ry="5.500" /><circle cx="6.500" cy="6.500" r=".6" /></svg><svg class="w-[5px] h-1 ml-0.5"><use href="#caret" /></svg></button>
                <button aria-label="Look at" class="w-[17px] flex justify-center"><svg class="w-[13px] h-[13px]" viewBox="0 0 13 13" fill="#ddd" stroke="#666"><path d="M1.500 5.500h10v6h-10zM3 5V2.500h7V5M1.500 8h10M4 10h5M6.500 1v3" /></svg></button>
                <button aria-label="Pan" class="w-[17px] flex justify-center"><svg class="w-[13px] h-[13px]" viewBox="0 0 13 13"><path d="M4.500 12L1.500 8l1-1 2 1V3l1-.5.7 3V1.500l1.200-.5.4 4.500L8.500 2l1 .3-.2 4L11 4l.8.5L10 12z" fill="#fff" stroke="#666" /></svg></button>
                <button aria-label="Zoom" class="w-[17px] flex justify-center"><svg class="w-[13px] h-[13px]" viewBox="0 0 13 13" fill="none" stroke="#555"><circle cx="5" cy="5.500" r="3" /><path d="M7 8l3 3.500" stroke-width="1.600" /><path d="M9 3.500h3.500M10.700 1.700v3.600M10 7.500h3" /></svg></button>
                <button aria-label="Fit" class="w-[21px] flex items-center justify-center"><svg class="w-[13px] h-[13px]" viewBox="0 0 13 13" fill="none" stroke="#555"><path d="M1 1.500h10.500V11H1z" stroke-dasharray="2 1" stroke-width=".7" /><circle cx="6" cy="6" r="3.500" fill="#eee" /><path d="M8.500 8.500L12 12" stroke-width="1.600" /></svg><svg class="w-[5px] h-1 ml-0.5"><use href="#caret" /></svg></button>
                <button aria-label="Display settings" class="w-[21px] flex items-center justify-center"><svg class="w-[13px] h-[13px]" viewBox="0 0 13 13"><path d="M1 2h11v7H1z" fill="#6fa6cc" stroke="#777" /><path d="M5 9.500h3V11h2v1H3v-1h2z" fill="#555" /></svg><svg class="w-[5px] h-1 ml-0.5"><use href="#caret" /></svg></button>
                <button aria-label="Grid and snaps" class="w-[21px] flex items-center justify-center"><svg class="w-[13px] h-[13px]" viewBox="0 0 13 13" fill="#ccc" stroke="#666" stroke-width=".9"><path d="M1.500 1.500h10v10h-10zM4 1.500v10M6.500 1.500v10M9 1.500v10" /><path d="M1.500 4h10M1.500 6.500h10M1.500 9h10" stroke="#999" stroke-width=".5" /></svg><svg class="w-[5px] h-1 ml-0.5"><use href="#caret" /></svg></button>
                <button aria-label="Viewports" class="w-[21px] flex items-center justify-center"><svg class="w-[13px] h-[13px]" viewBox="0 0 13 13" fill="#cde" stroke="#555"><path d="M1.500 4L4 1.500h8V9l-2.500 2.500h-8zM1.500 4h8v7.500M9.500 4L12 1.500" /><circle cx="5.500" cy="7.500" r="2" fill="#fff" stroke="#357" /></svg><svg class="w-[5px] h-1 ml-0.5"><use href="#caret" /></svg></button>
                <button aria-label="Stock" class="w-[21px] flex items-center justify-center"><svg class="w-[13px] h-[13px]" viewBox="0 0 13 13"><path d="M3 1.500h8v3H3zM1 5.500h11v3H1zM3 9.500h8v2H3z" fill="#6fb0dc" stroke="#456" stroke-width=".8" /></svg><svg class="w-[5px] h-1 ml-0.5"><use href="#caret" /></svg></button>
                <button aria-label="Regenerate" class="w-[21px] flex items-center justify-center"><svg class="w-[13px] h-[13px]" viewBox="0 0 13 13" fill="none" stroke="#4588b5" stroke-width="1.200"><path d="M1.500 8Q1 3 6 2t5 3M11.500 2v3H8.500M11.500 6q0 5-5 5.500T2 8.500M1.500 11.500v-3h3" /></svg><svg class="w-[5px] h-1 ml-0.5"><use href="#caret" /></svg></button>
                <button aria-label="Toolpath display" class="w-[21px] flex items-center justify-center"><svg class="w-[13px] h-[13px]" viewBox="0 0 13 13"><path d="M6.500 1L12 6.500 6.500 12 1 6.500z" fill="#5aa8e0" stroke="#4b93cb" stroke-width=".6" /><path d="M4 4l5.500 5.500M9 4L3.500 9.500" stroke="#4a97d2" /></svg><svg class="w-[5px] h-1 ml-0.5"><use href="#caret" /></svg></button>
                <button aria-label="Machine display" class="w-[21px] flex items-center justify-center"><svg class="w-[13px] h-[13px]" viewBox="0 0 13 13"><path d="M1 3h11v7H1z" fill="#cfd6da" stroke="#778" /><circle cx="6.500" cy="6" r="2" fill="#5aa0d0" /><path d="M1 10h11" stroke="#357" stroke-width="1.500" /></svg><svg class="w-[5px] h-1 ml-0.5"><use href="#caret" /></svg></button>
                <button aria-label="Tool display" class="w-[21px] flex items-center justify-center"><svg class="w-[13px] h-[13px]" viewBox="0 0 13 13"><path d="M3 1h7v3L8.500 5h-4L3 4z" fill="#bbb" stroke="#888" stroke-width=".6" /><path d="M5.500 5h2.500v6l-1.200 1.500L5.500 11z" fill="#999" /></svg><svg class="w-[5px] h-1 ml-0.5"><use href="#caret" /></svg></button>
                <button aria-label="Fixture display" class="w-[21px] flex items-center justify-center"><svg class="w-[13px] h-[13px]" viewBox="0 0 13 13"><path d="M1 2h7q4 1 4 4.500T8 11H1V8.500h6q2-.5 2-2t-2-2H1z" fill="#4d9fd4" stroke="#579" stroke-width=".6" /></svg><svg class="w-[5px] h-1 ml-0.5"><use href="#caret" /></svg></button>
            </div>
        </div>

        <div class="absolute right-2 bottom-[5px] h-3 flex items-center gap-2 text-[8px] font-medium text-[#222]">
            <span>Bore4 | Machining time: 0:02:52</span>
            <svg class="w-3 h-3" viewBox="0 0 12 12"><path d="M6 .5a5.500 5.500 0 1 0 0 11h5.500V6A5.500 5.500 0 0 0 6 .5z" fill="#111" /><path d="M3 7.500q2-4 6-3M4.500 8q1-2.500 4-2" stroke="#ddd" fill="none" /></svg>
        </div>
    </main>

    <!-- taskbar -->
    <footer class="h-8 shrink-0 grid grid-cols-[1fr_auto_1fr] items-center border-t border-[#b5cfd0] bg-linear-to-r from-[#cdeeec] via-[#dfedcb] to-[#d9d4ea]">
        <span></span>
        <div class="flex items-center pl-1">
            <button aria-label="Start" class="mr-[10px]"><svg class="w-4 h-4" viewBox="0 0 16 16"><path d="M0 0h7.500v7.500H0zM8.500 0H16v7.500H8.500zM0 8.500h7.500V16H0zM8.500 8.500H16V16H8.500z" fill="#0c7fd2" /></svg></button>
            <label class="w-36 h-5 flex items-center rounded-full bg-[#f3fbfa] pl-1.5">
                <svg class="w-[11px] h-[11px] shrink-0" viewBox="0 0 11 11" fill="none" stroke="#222" stroke-width="1.400"><circle cx="4.700" cy="4.700" r="3.700" /><path d="M7.500 7.500l3 3" /></svg>
                <input type="text" aria-label="Search" placeholder="Search" class="w-0 grow ml-1.5 bg-transparent text-[9px] font-['Noto_Sans',sans-serif] placeholder:text-[#666]">
                <svg class="w-[30px] h-4 mr-0.5 shrink-0" viewBox="0 0 30 16"><path d="M1 14q1-4 7-5 2-4 7-4t7 4q6 1 7 5-14 4-28 0z" fill="#56617f" /><path d="M2 12q6-5 13-2t13 2" fill="none" stroke="#a9b1c9" stroke-width="2" /><path d="M6 6h1M11 3h1M16 2h1M21 5h1M25 6h1M14 6h1M3 9h1" stroke="#7f8fd0" /></svg>
            </label>
            <button aria-label="File Explorer" class="w-[30px] ml-[3px] flex justify-center"><svg class="w-[18px] h-[18px]" viewBox="0 0 18 18"><path d="M1 2h6l2 2h8v11H1z" fill="#e5a91f" /><path d="M1 6h16v9H1z" fill="#fbd256" /><path d="M4 12h10v4H4z" fill="#1f7dc9" /></svg></button>
            <button aria-label="Chrome" class="w-[30px] flex justify-center"><svg class="w-5 h-6" viewBox="0 0 20 24"><circle cx="9" cy="13" r="7.500" fill="#f4c20d" /><path d="M9 13L2.500 9.300A7.500 7.500 0 0 1 15.500 9.300H9z" fill="#db4437" /><path d="M9 13L2.500 9.300A7.500 7.500 0 0 0 9 20.500L12 14z" fill="#0f9d58" /><circle cx="9" cy="13" r="3.600" fill="#fff" /><circle cx="9" cy="13" r="2.800" fill="#4285f4" /><circle cx="15" cy="6" r="4.800" fill="#a38c78" /><path d="M12 9.500q3-3.500 6 0M13.500 3.500h3v3h-3z" fill="#5a463c" /><path d="M7 23h4" stroke="#777" stroke-width="1.500" /></svg></button>
            <button aria-label="Autodesk Fusion" class="w-6 h-6 ml-0.5 rounded-sm bg-white/50 flex justify-center"><svg class="w-5 h-6" viewBox="0 0 20 24"><path d="M2.500 4L5 2h12v14l-2 2H2.500z" fill="#c4480a" /><path d="M5 2h12v14H5z" fill="#f06a12" /><path d="M9 12V5h5M9 8.500h4" fill="none" stroke="#fff" stroke-width="1.600" /><path d="M5 13.500h11v4H5z" fill="#6b2b0c" /><path d="M5 22.500h10" stroke="#1874b8" stroke-width="2" /></svg></button>
        </div>
        <div class="flex items-center justify-end pr-3 text-[#222] font-['Noto_Sans',sans-serif]">
            <button aria-label="Hidden icons" class="mr-[13px]"><svg class="w-2 h-2" viewBox="0 0 8 8" fill="none" stroke="#222"><path d="M1 6l3-3.500L7 6" /></svg></button>
            <button aria-label="Microphone" class="mr-[13px]"><svg class="w-2 h-3" viewBox="0 0 8 12" fill="none" stroke="#1f73b8"><path d="M2.500 2q1.500-2 3 0v4q-1.500 2-3 0z" fill="#9cc8e8" /><path d="M.5 5q0 4 3.500 4t3.500-4M4 9v2.500" /></svg></button>
            <button aria-label="Network and sound" class="flex items-center gap-1 mr-[10px]"><svg class="w-3 h-[10px]" viewBox="0 0 12 10" fill="none" stroke="#333"><path d="M1 4q5-5 10 0M2.500 5.800q3.500-3.500 7 0M4.300 7.500q1.700-1.500 3.400 0" /><circle cx="6" cy="8.500" r=".6" /></svg><svg class="w-3 h-[10px]" viewBox="0 0 12 10" fill="none" stroke="#333"><path d="M.5 3.500h2L5 1v8L2.500 6.500h-2zM7 3.500q1.200 1.500 0 3M8.500 2q2.500 3 0 6M10 1q3 4 0 8" /></svg></button>
            <time class="text-right leading-[11px]">9:43 AM<br>2/3/2025</time>
        </div>
    </footer>

    <script>
        drawGrid();
        drawHoles();

        // floor grid, the two coloured lines are the world X and Y axes
        function drawGrid() {
            let str = '';
            for (let k = -7; k <= 14; k++) {
                const y = 52 + 72 * k;
                str += `<line x1="-60" y1="${y - 0.403 * 500}" x2="1340" y2="${y + 0.403 * 900}" stroke="${k == 0 ? '#ecbcbc' : '#e2e2e2'}" />`;
            }
            for (let k = -7; k <= 7; k++) {
                const x = 874 + 161 * k;
                str += `<line x1="${x - 700}" y1="708" x2="${x + 300}" y2="68" stroke="${k == 0 ? '#c8e8c8' : '#e2e2e2'}" />`;
            }
            document.getElementById('grid').innerHTML = str;
        }

        function drawHoles() {
            let holes = '';
            let path = '';
            for (let i = 0; i <= 40; i++) {
                const x = 369 + 13.75 * i;
                const y = 523 - 8.75 * i;
                holes += `<ellipse cx="${x}" cy="${y}" rx="4" ry="2" fill="#0d3a4a" stroke="#04300a" /><path d="M${x - 1} ${y}h4" stroke="#6fb0b8" />`;
                path += `<path d="M${371 + 13.73 * i} ${514 - 8.68 * i}v8" />`;
            }
            document.getElementById('topHoles').innerHTML = holes;
            document.getElementById('toolpath').innerHTML = path;

            const side = [[806, 290], [779, 307], [790, 320], [803, 331], [788, 340], [775, 349], [751, 325], [724, 342],
            [736, 355], [747, 367], [733, 375], [720, 384], [675, 369], [648, 387], [660, 399], [671, 411], [645, 427],
            [599, 422], [572, 439], [583, 452], [595, 464], [582, 472], [568, 482]];
            // six by three pattern at each end
            [[387, 553], [386, 573], [384, 593], [868, 246], [866, 267], [864, 288]].forEach(row => {
                for (let i = 0; i < 6; i++) {
                    side.push([row[0] + 13.7 * i, row[1] - 8.7 * i]);
                }
            });
            document.getElementById('sideHoles').innerHTML = side.map(p =>
                `<ellipse cx="${p[0]}" cy="${p[1]}" rx="2.500" ry="4.500" transform="rotate(15 ${p[0]} ${p[1]})" />`).join('');
        }
    </script>
</body>

</html>
